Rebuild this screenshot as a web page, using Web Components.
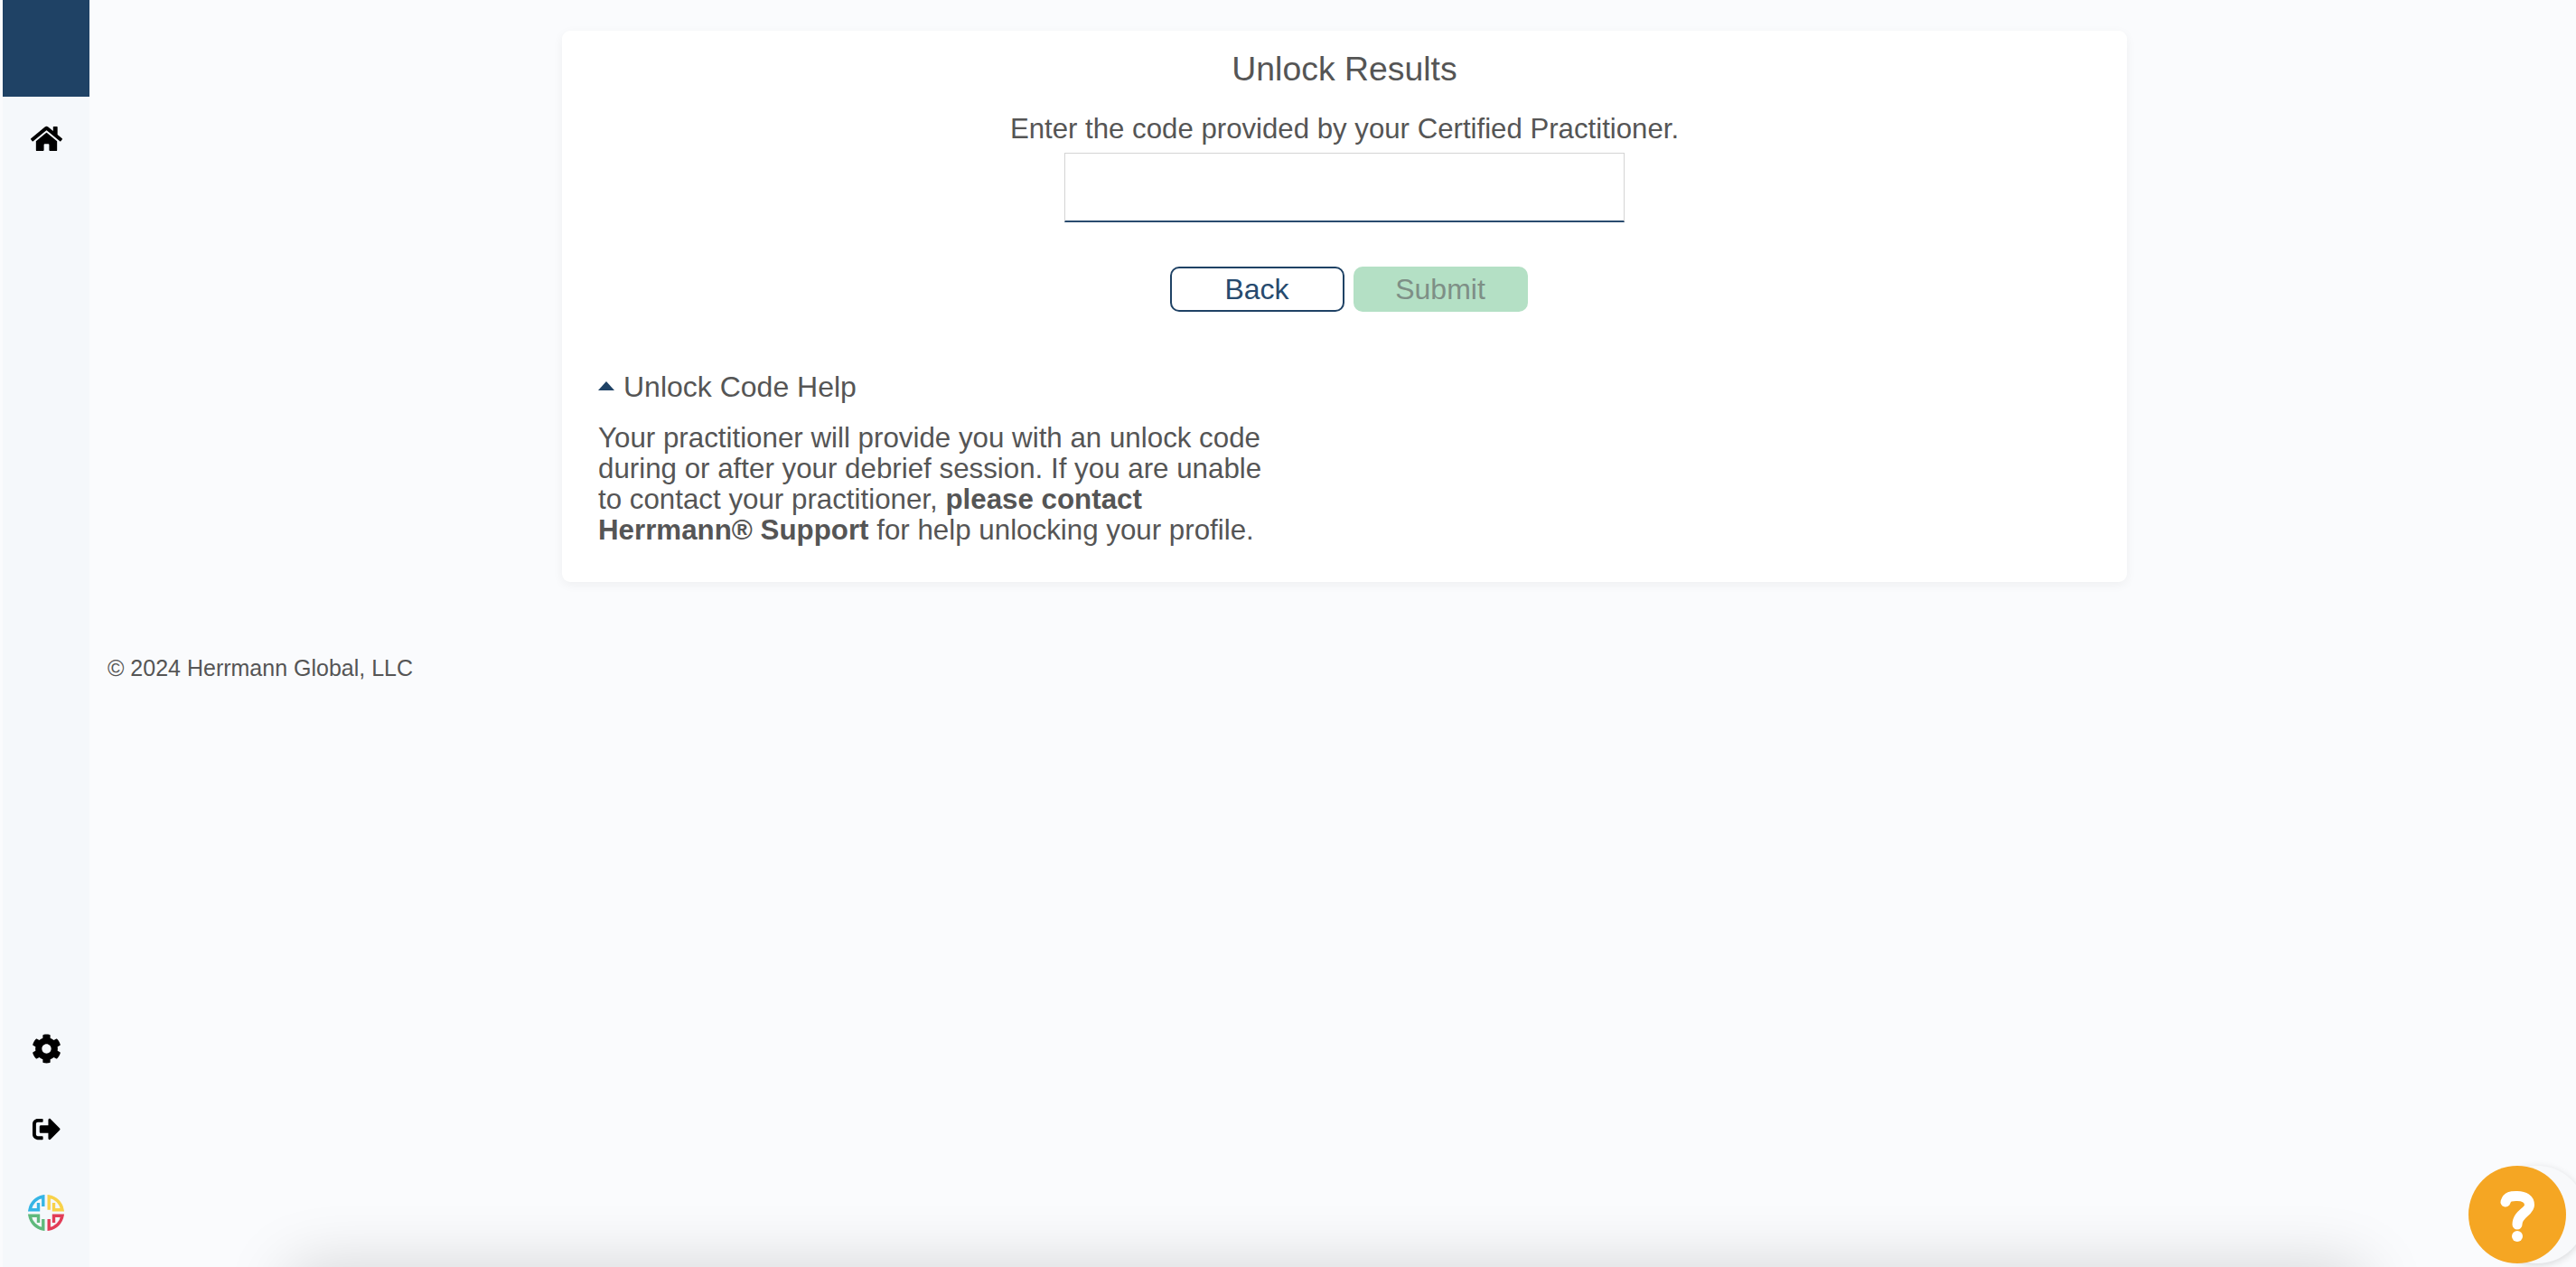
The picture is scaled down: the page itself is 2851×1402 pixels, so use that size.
<!DOCTYPE html>
<html lang="en">
<head>
<meta charset="utf-8">
<title>Unlock Results</title>
<style>
  html, body { margin: 0; height: 100%; background: #fafbfd; overflow: hidden; }
  body { font-family: "Liberation Sans", Arial, sans-serif; color: #555; }
</style>
</head>
<body>
<app-shell>
  <side-bar slot="side">
    <nav-icon slot="top" icon="home"></nav-icon>
    <nav-icon slot="bottom" icon="cog"></nav-icon>
    <nav-icon slot="bottom" icon="signout"></nav-icon>
    <brand-mark slot="bottom"></brand-mark>
  </side-bar>
  <unlock-card>
    <help-toggle slot="help" label="Unlock Code Help">
      Your practitioner will provide you with an unlock code during or after your debrief session. If you are unable to contact your practitioner, <b>please contact Herrmann® Support</b> for help unlocking your profile.
    </help-toggle>
  </unlock-card>
  <page-footer slot="footer">© 2024 Herrmann Global, LLC</page-footer>
</app-shell>
<bottom-glow></bottom-glow>
<help-fab></help-fab>

<script>
const ICONS = {
  home: ['0 0 576 512', 35, 'M280.37 148.26L96 300.11V464a16 16 0 0 0 16 16l112.06-.29a16 16 0 0 0 15.92-16V368a16 16 0 0 1 16-16h64a16 16 0 0 1 16 16v95.64a16 16 0 0 0 16 16.05L464 480a16 16 0 0 0 16-16V300L295.67 148.26a12.19 12.19 0 0 0-15.3 0zM571.6 251.47L488 182.56V44.05a12 12 0 0 0-12-12h-56a12 12 0 0 0-12 12v72.61L318.47 43a48 48 0 0 0-61 0L4.34 251.47a12 12 0 0 0-1.6 16.9l25.5 31A12 12 0 0 0 45.15 301l235.22-193.74a12.19 12.19 0 0 1 15.3 0L530.9 301a12 12 0 0 0 16.9-1.6l25.5-31a12 12 0 0 0-1.7-16.93z'],
  cog: ['0 0 512 512', 33, 'M487.4 315.7l-42.6-24.6c4.3-23.2 4.3-47 0-70.2l42.6-24.6c4.9-2.8 7.1-8.6 5.5-14-11.1-35.6-30-67.8-54.7-94.6-3.8-4.1-10-5.1-14.8-2.3L380.8 110c-17.9-15.4-38.5-27.3-60.8-35.1V25.8c0-5.6-3.9-10.5-9.4-11.7-36.7-8.2-74.3-7.8-109.2 0-5.5 1.2-9.4 6.1-9.4 11.7V75c-22.2 7.9-42.8 19.8-60.8 35.1L88.7 85.5c-4.9-2.8-11-1.9-14.8 2.3-24.7 26.7-43.6 58.9-54.7 94.6-1.7 5.4.6 11.2 5.5 14L67.3 221c-4.3 23.2-4.3 47 0 70.2l-42.6 24.6c-4.9 2.8-7.1 8.6-5.5 14 11.1 35.6 30 67.8 54.7 94.6 3.8 4.1 10 5.1 14.8 2.3l42.6-24.6c17.9 15.4 38.5 27.3 60.8 35.1v49.2c0 5.6 3.9 10.5 9.4 11.7 36.7 8.2 74.3 7.8 109.2 0 5.5-1.2 9.4-6.1 9.4-11.7v-49.2c22.2-7.9 42.8-19.8 60.8-35.1l42.6 24.6c4.9 2.8 11 1.9 14.8-2.3 24.7-26.7 43.6-58.9 54.7-94.6 1.5-5.5-.7-11.3-5.6-14.1zM256 336c-44.1 0-80-35.9-80-80s35.9-80 80-80 80 35.9 80 80-35.9 80-80 80z'],
  signout: ['0 0 512 512', 31, 'M497 273L329 441c-15 15-41 4.5-41-17v-96H152c-13.3 0-24-10.7-24-24v-96c0-13.3 10.7-24 24-24h136V88c0-21.4 25.9-32 41-17l168 168c9.3 9.4 9.3 24.6 0 34zM192 436v-40c0-6.6-5.4-12-12-12H96c-17.7 0-32-14.3-32-32V160c0-17.7 14.3-32 32-32h84c6.6 0 12-5.4 12-12V76c0-6.6-5.4-12-12-12H96c-53 0-96 43-96 96v192c0 53 43 96 96 96h84c6.6 0 12-5.4 12-12z']
};

class AppShell extends HTMLElement {
  constructor() {
    super();
    this.attachShadow({mode: 'open'}).innerHTML = `
      <style>
        :host { display: flex; height: 100vh; }
        main { flex: 1; padding: 34px 497px 0 523px; min-width: 0; }
        .foot { margin: 80px 0 0 -503px; }
      </style>
      <slot name="side"></slot>
      <main>
        <slot></slot>
        <div class="foot"><slot name="footer"></slot></div>
      </main>`;
  }
}

class SideBar extends HTMLElement {
  constructor() {
    super();
    this.attachShadow({mode: 'open'}).innerHTML = `
      <style>
        :host { display: flex; flex-direction: column; width: 96px; margin-left: 3px; background: #f5f8fb; flex: none; }
        .brand { height: 107px; background: #1f4265; flex: none; }
        .top { margin-top: 30px; display: flex; flex-direction: column; }
        .bottom { margin-top: auto; padding-bottom: 40px; display: flex; flex-direction: column; gap: 56px; align-items: center; }
      </style>
      <div class="brand"></div>
      <div class="top"><slot name="top"></slot></div>
      <div class="bottom"><slot name="bottom"></slot></div>`;
  }
}

class NavIcon extends HTMLElement {
  constructor() {
    super();
    const [box, size, d] = ICONS[this.getAttribute('icon')];
    this.attachShadow({mode: 'open'}).innerHTML = `
      <style>
        :host { display: flex; justify-content: center; align-items: center; height: 33px; width: 96px; }
        svg { display: block; }
      </style>
      <svg viewBox="${box}" width="${size}" height="${size}" fill="#000"><path d="${d}"/></svg>`;
  }
}

class BrandMark extends HTMLElement {
  constructor() {
    super();
    this.attachShadow({mode: 'open'}).innerHTML = `
      <style>
        :host { display: block; width: 40px; height: 40px; }
        svg { display: block; }
        path { fill: none; stroke-width: 3.400; stroke-linejoin: miter; }
      </style>
      <svg viewBox="-20 -20 40 40" width="40" height="40">
        <path stroke="#35b5e5" d="M-3.200 -7V-18A18.300 18.300 0 0 0 -18 -3.200H-8.500V-11"/>
        <path stroke="#f8d24a" d="M3.200 -3.200V-18A18.300 18.300 0 0 1 18 -3.200H8.500V-11"/>
        <path stroke="#5fb97c" d="M-3.200 7V18A18.300 18.300 0 0 1 -18 3.200H-8.500V11"/>
        <path stroke="#e23d57" d="M3.200 7V18A18.300 18.300 0 0 0 18 3.200H8.500V11"/>
      </svg>`;
  }
}

class HmButton extends HTMLElement {
  constructor() {
    super();
    this.attachShadow({mode: 'open'}).innerHTML = `
      <style>
        :host { display: block; }
        button {
          display: block; width: 193px; height: 50px; padding: 0; box-sizing: border-box;
          font: 32px "Liberation Sans", Arial, sans-serif; border-radius: 10px; cursor: pointer;
          background: #fff; color: #264a6e; border: 2px solid #1f4265;
        }
        :host([primary]) button { background: #b4e0c5; color: #7e8f86; border: 0; cursor: default; }
      </style>
      <button type="button"><slot></slot></button>`;
    if (this.hasAttribute('primary')) this.shadowRoot.querySelector('button').disabled = true;
  }
}

class HelpToggle extends HTMLElement {
  constructor() {
    super();
    this.attachShadow({mode: 'open'}).innerHTML = `
      <style>
        :host { display: block; padding: 0 0 0 40px; }
        .head { display: flex; align-items: center; height: 36px; font-size: 32px; gap: 10px; }
        .head svg { display: block; margin-top: -3px; }
        p { margin: 22px 0 0; width: 750px; font-size: 31.300px; line-height: 34px; }
      </style>
      <div class="head">
        <svg width="18" height="10" viewBox="0 0 18 10"><path fill="#1f4265" d="M9 0L18 10H0Z"/></svg>
        <span>${this.getAttribute('label')}</span>
      </div>
      <p><slot></slot></p>`;
  }
}

class UnlockCard extends HTMLElement {
  constructor() {
    super();
    this.attachShadow({mode: 'open'}).innerHTML = `
      <style>
        :host { display: block; box-sizing: border-box; height: 610px; padding-top: 20px; background: #fff; border-radius: 9px; box-shadow: 0 3px 12px rgba(0,0,0,.05); }
        h1 { margin: 0; font-size: 37.400px; line-height: 44px; font-weight: 400; text-align: center; }
        .lead { margin: 27px 0 0; font-size: 31.200px; line-height: 36px; text-align: center; }
        input { display: block; box-sizing: border-box; width: 620px; height: 77px; margin: 8px auto 0; padding: 0 12px; background: #fff; border: 1px solid #d4d4d4; border-bottom: 2px solid #2a4c6f; border-radius: 0; outline: 0; font: 31px "Liberation Sans", Arial, sans-serif; }
        .actions { display: flex; justify-content: center; gap: 10px; margin-top: 49px; padding-left: 9px; }
        .help { margin-top: 65px; }
      </style>
      <h1>Unlock Results</h1>
      <p class="lead">Enter the code provided by your Certified Practitioner.</p>
      <input type="text" aria-label="Unlock code">
      <div class="actions">
        <hm-button>Back</hm-button>
        <hm-button primary>Submit</hm-button>
      </div>
      <div class="help"><slot name="help"></slot></div>`;
  }
}

class PageFooter extends HTMLElement {
  constructor() {
    super();
    this.attachShadow({mode: 'open'}).innerHTML = `
      <style>:host { display: block; font-size: 25px; line-height: 30px; }</style>
      <slot></slot>`;
  }
}

class BottomGlow extends HTMLElement {
  constructor() {
    super();
    this.attachShadow({mode: 'open'}).innerHTML = `
      <style>
        :host { position: fixed; left: 325px; right: 240px; top: 1412px; height: 40px; border-radius: 20px; box-shadow: 0 0 70px 10px rgba(0,0,0,.17); }
      </style>`;
  }
}

class HelpFab extends HTMLElement {
  constructor() {
    super();
    this.attachShadow({mode: 'open'}).innerHTML = `
      <style>
        :host { position: fixed; left: 2732px; top: 1290px; width: 108px; height: 108px; }
        .back { position: absolute; left: 22px; top: 0; width: 108px; height: 108px; border-radius: 50%; background: #f8f9fb; box-shadow: 0 2px 8px rgba(0,0,0,.14); }
        .front { position: absolute; inset: 0; border-radius: 50%; background: #f5a623; }
        svg { position: absolute; inset: 0; display: block; }
      </style>
      <div class="back"></div>
      <div class="front"></div>
      <svg viewBox="0 0 108 108" width="108" height="108">
        <path d="M41 40C43 33 48 33.500 54 33.500C62 33.500 67.500 37 67.500 43.500C67.500 51 54 53 54 65" fill="none" stroke="#fff" stroke-width="11" stroke-linecap="round"/>
        <circle cx="54" cy="78" r="6" fill="#fff"/>
      </svg>`;
  }
}

customElements.define('app-shell', AppShell);
customElements.define('side-bar', SideBar);
customElements.define('nav-icon', NavIcon);
customElements.define('brand-mark', BrandMark);
customElements.define('hm-button', HmButton);
customElements.define('help-toggle', HelpToggle);
customElements.define('unlock-card', UnlockCard);
customElements.define('page-footer', PageFooter);
customElements.define('bottom-glow', BottomGlow);
customElements.define('help-fab', HelpFab);
</script>
</body>
</html>
